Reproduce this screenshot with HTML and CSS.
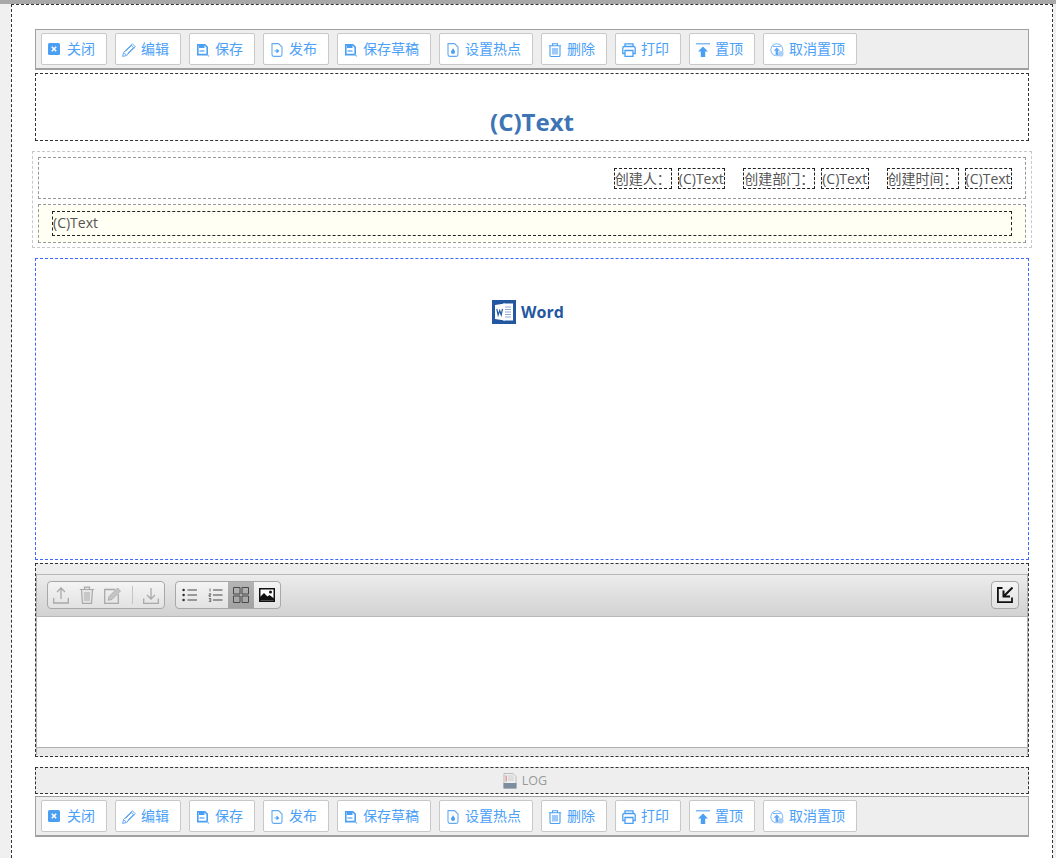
FILE: index.html
```html
<!DOCTYPE html>
<html lang="zh">
<head>
<meta charset="utf-8">
<title>Form</title>
<link rel="stylesheet" href="styles.css">
</head>
<body>
<svg class="defs" width="0" height="0" aria-hidden="true">
  <symbol id="i-close" viewBox="0 0 14 14"><rect x="0" y="0" width="12" height="12" rx="1.500" fill="#4b9ff2"/><path d="M3.800 3.800l4.400 4.400M8.200 3.800l-4.400 4.400" stroke="#fff" stroke-width="1.600" fill="none"/></symbol>
  <symbol id="i-edit" viewBox="0 0 14 14"><path d="M.6 13.400l1-4L10.400.8l3 3-8.800 8.700zM1.600 9.400l3 3M9 2.200l3 3M3.500 8.500l6.500-6.500M5.500 10.500l6.500-6.500" fill="none" stroke="#62a9f3" stroke-width="1"/></symbol>
  <symbol id="i-save" viewBox="0 0 14 14"><path d="M1.800 1.800h7l2.400 2.400v7.400H1.800z" fill="none" stroke="#4b9ff2" stroke-width="1.600"/><rect x="3" y="1.500" width="5.500" height="3.500" fill="#4b9ff2"/><path d="M3.500 8h5" stroke="#4b9ff2" stroke-width="1.200"/><path d="M11 11.500l2 2" stroke="#8cc0f5" stroke-width="1.100"/></symbol>
  <symbol id="i-pub" viewBox="0 0 14 14"><path d="M2 .6h6.500L12 4v7.600a1.800 1.800 0 0 1-1.800 1.800H3.800A1.800 1.800 0 0 1 2 11.600z" fill="none" stroke="#62a9f3" stroke-width="1.100"/><path d="M4.500 8h3.500M6.500 6.200L8.500 8l-2 1.800" fill="none" stroke="#4b9ff2" stroke-width="1.200"/></symbol>
  <symbol id="i-hot" viewBox="0 0 14 14"><path d="M2 .6h6.500L12 4v7.600a1.800 1.800 0 0 1-1.800 1.800H3.800A1.800 1.800 0 0 1 2 11.600z" fill="none" stroke="#62a9f3" stroke-width="1.100"/><path d="M7 5c.3 1.300 2 2.200 2 4a2 2 0 0 1-4 0C5 7.800 6.500 6.800 7 5z" fill="#4b9ff2"/></symbol>
  <symbol id="i-del" viewBox="0 0 14 14"><path d="M.8 2.800h12.400M4.500 2.500V.8h5v1.700M2 3v9.200a1.300 1.300 0 0 0 1.300 1.300h7.400a1.300 1.300 0 0 0 1.300-1.300V3M5 5v6.500M7 5v6.500M9 5v6.500" fill="none" stroke="#4b9ff2" stroke-width="1.100"/></symbol>
  <symbol id="i-print" viewBox="0 0 14 14"><path d="M3 3.500V.8h8v2.700M3 10.500H.8V5a1.500 1.500 0 0 1 1.500-1.500h9.400A1.500 1.500 0 0 1 13.200 5v5.500H11M3 7.500h8v5.800H3z" fill="none" stroke="#4b9ff2" stroke-width="1.300"/></symbol>
  <symbol id="i-top" viewBox="0 0 14 14"><path d="M0 .8h14" stroke="#62a9f3" stroke-width="1.200"/><path d="M7 3.500l5 5H9.200V14H4.800V8.500H2z" fill="#4b9ff2"/></symbol>
  <symbol id="i-untop" viewBox="0 0 14 14"><circle cx="6.800" cy="6.800" r="6" fill="none" stroke="#8cc0f5" stroke-width="1.100"/><path d="M3 3.500h7.600" stroke="#7db8f4"/><path d="M6.800 4.500l3.200 3.200H8V12H5.600V7.700h-2z" fill="#62a9f3"/><circle cx="10.800" cy="10.800" r="2.800" fill="#a9cff5"/></symbol>
  <symbol id="i-log" viewBox="0 0 14 16"><path d="M1 .5h9l3 3V15H1z" fill="#eee" stroke="#bbb"/><rect x="2.500" y="2.500" width="1.500" height="6" fill="#e59a9a"/><path d="M5 3h5M5 5h6M5 7h6" stroke="#ccc"/><rect x="0.500" y="10" width="13" height="5.500" fill="#7d8da0"/></symbol>
</svg>

<main class="page">
  <nav class="toolbar">
    <a class="btn"><svg class="ico"><use href="#i-close"/></svg>关闭</a>
    <a class="btn"><svg class="ico"><use href="#i-edit"/></svg>编辑</a>
    <a class="btn"><svg class="ico"><use href="#i-save"/></svg>保存</a>
    <a class="btn"><svg class="ico"><use href="#i-pub"/></svg>发布</a>
    <a class="btn"><svg class="ico"><use href="#i-save"/></svg>保存草稿</a>
    <a class="btn"><svg class="ico"><use href="#i-hot"/></svg>设置热点</a>
    <a class="btn"><svg class="ico"><use href="#i-del"/></svg>删除</a>
    <a class="btn"><svg class="ico"><use href="#i-print"/></svg>打印</a>
    <a class="btn"><svg class="ico"><use href="#i-top"/></svg>置顶</a>
    <a class="btn"><svg class="ico"><use href="#i-untop"/></svg>取消置顶</a>
  </nav>

  <h1 class="title">(C)Text</h1>

  <section class="info">
    <div class="meta">
      <span class="cell">创建人：</span><span class="cell value">(C)Text</span>
      <span class="cell gap">创建部门：</span><span class="cell value">(C)Text</span>
      <span class="cell gap">创建时间：</span><span class="cell value">(C)Text</span>
    </div>
    <div class="summary"><div class="summary-text">(C)Text</div></div>
  </section>

  <section class="doc">
    <div class="doc-head">
      <svg class="word" viewBox="0 0 24 24" width="24" height="24">
        <rect width="24" height="24" fill="#23579f"/>
        <rect x="11" y="3.500" width="10" height="17" fill="#fff"/>
        <path d="M13 7h6M13 9.500h6M13 12h6M13 14.500h6M13 17h6" stroke="#8fa9cf" stroke-width="1.200"/>
        <path d="M3 5l10-1.500v17L3 19z" fill="#fff"/>
        <path d="M4.800 8.800l1.300 6.200 1.600-4.500 1.500 4.500 1.300-6.200" fill="none" stroke="#23579f" stroke-width="1.200"/>
      </svg>
      <span class="word-name">Word</span>
    </div>
  </section>

  <section class="files">
    <div class="files-frame">
      <div class="files-bar">
        <div class="group">
          <span class="tool"><svg width="16" height="18" viewBox="0 0 16 18"><path d="M8 13V2.500M4 6l4-4 4 4M.7 12v5h14.600v-5" fill="none" stroke="#a9a9a9" stroke-width="1.300"/></svg></span>
          <span class="tool"><svg width="16" height="18" viewBox="0 0 16 18"><path d="M.8 3.500h14.400M5.500 3V1.200h5V3M2.500 4l1 13.300h9l1-13.300" fill="#e6e6e6" stroke="#a9a9a9" stroke-width="1.200"/><path d="M6 6v9M8 6v9M10 6v9" stroke="#a9a9a9"/></svg></span>
          <span class="tool"><svg width="18" height="18" viewBox="0 0 18 18"><path d="M11 3.500H.7v13.800h13.600V8" fill="none" stroke="#a9a9a9" stroke-width="1.300"/><path d="M5 10.500L13.500 2l3 3-8.500 8.500-3.800.8z" fill="#c4c4c4" stroke="#a9a9a9" stroke-width=".8"/></svg></span>
          <span class="sep"></span>
          <span class="tool"><svg width="16" height="18" viewBox="0 0 16 18"><path d="M8 2v10.500M4 9l4 4 4-4M.7 12.500v4.800h14.600v-4.800" fill="none" stroke="#a9a9a9" stroke-width="1.300"/></svg></span>
        </div>
        <div class="group">
          <span class="view"><svg width="15" height="14" viewBox="0 0 15 14"><path d="M5.500 2h9.500M5.500 7h9.500M5.500 12h9.500" stroke="#333" stroke-width=".9"/><circle cx="1.600" cy="2" r="1.300" fill="#333"/><circle cx="1.600" cy="7" r="1.300" fill="#333"/><circle cx="1.600" cy="12" r="1.300" fill="#333"/></svg></span>
          <span class="view"><svg width="15" height="14" viewBox="0 0 15 14"><path d="M5 2h9.500M5 7h9.500M5 12h9.500" stroke="#333" stroke-width=".9"/><path d="M2 .5v3M.8 5.800h2v1.200H1v1.300h2M.8 10.500h2v3h-2M1.200 12h1.500" stroke="#444" stroke-width=".7" fill="none"/></svg></span>
          <span class="view view-on"><svg width="16" height="16" viewBox="0 0 16 16"><path d="M.5.500h6.500v6.500H.5zM9 .5h6.500v6.500H9zM.5 9h6.500v6.500H.5zM9 9h6.500v6.500H9z" fill="none" stroke="#4a4a4a" stroke-width="1"/></svg></span>
          <span class="view"><svg width="16" height="14" viewBox="0 0 16 14"><rect x=".75" y=".75" width="14.500" height="12.500" fill="#fff" stroke="#111" stroke-width="1.500"/><path d="M1 12.500V9l4-4 3.500 3.500 2-1.500 4.500 3.500v2z" fill="#111"/><circle cx="11.500" cy="4" r="1.500" fill="#111"/></svg></span>
        </div>
        <span class="expand"><svg width="16" height="16" viewBox="0 0 16 16"><path d="M5.500 1H.9v14.100H15V10.500" fill="none" stroke="#111" stroke-width="1.800"/><path d="M15.500.5L7 9M6.500 3.500V9.500H13" fill="none" stroke="#111" stroke-width="2"/></svg></span>
      </div>
      <div class="files-body"></div>
      <div class="files-foot"></div>
    </div>
  </section>

  <div class="log"><svg class="log-ico"><use href="#i-log"/></svg>LOG</div>

  <nav class="toolbar toolbar-bottom">
    <a class="btn"><svg class="ico"><use href="#i-close"/></svg>关闭</a>
    <a class="btn"><svg class="ico"><use href="#i-edit"/></svg>编辑</a>
    <a class="btn"><svg class="ico"><use href="#i-save"/></svg>保存</a>
    <a class="btn"><svg class="ico"><use href="#i-pub"/></svg>发布</a>
    <a class="btn"><svg class="ico"><use href="#i-save"/></svg>保存草稿</a>
    <a class="btn"><svg class="ico"><use href="#i-hot"/></svg>设置热点</a>
    <a class="btn"><svg class="ico"><use href="#i-del"/></svg>删除</a>
    <a class="btn"><svg class="ico"><use href="#i-print"/></svg>打印</a>
    <a class="btn"><svg class="ico"><use href="#i-top"/></svg>置顶</a>
    <a class="btn"><svg class="ico"><use href="#i-untop"/></svg>取消置顶</a>
  </nav>
</main>
</body>
</html>
```
FILE: styles.css
```css
* { box-sizing: border-box; }
html, body { height: 100%; }
body {
  margin: 0;
  background: #f0f0f0;
  border-top: 4px solid #a8a8a8;
  font-family: "Open Sans", "Noto Sans CJK SC", sans-serif;
  font-size: 14px;
  color: #555;
  overflow: hidden;
}
.defs { display: block; height: 0; }
.page {
  width: 1042px;
  height: 854px;
  margin-left: 11px;
  padding: 24px 23px 0;
  background: #fff;
  border-top: 1px dashed #333;
  border-left: 1px dashed #333;
  border-right: 1px dashed #333;
}
.toolbar {
  display: flex;
  gap: 8px;
  height: 41px;
  padding: 3px 5px;
  background: #eee;
  border: 1px solid #a0a0a0;
  border-bottom-width: 2px;
}
.btn {
  display: flex;
  align-items: center;
  height: 32px;
  padding: 0 11px 2px 6px;
  background: #fff;
  border: 1px solid #c8c8c8;
  border-radius: 2px;
  color: #4ba0f7;
  font-size: 14px;
  white-space: nowrap;
}
.ico { width: 14px; height: 14px; margin: 4px 5px 0 0; flex: none; }
.title {
  display: flex;
  align-items: flex-end;
  justify-content: center;
  height: 68px;
  margin: 3px 0 0;
  border: 1px dashed #333;
  color: #3d74b6;
  font-size: 24px;
  font-weight: 700;
  line-height: 36px;
}
.info {
  width: 1000px;
  height: 97px;
  margin: 10px 0 0 -3px;
  padding: 5px;
  border: 1px dashed #c8c8c8;
}
.meta {
  display: flex;
  justify-content: flex-end;
  align-items: center;
  gap: 6px;
  height: 42px;
  padding-right: 13px;
  border: 1px dashed #999;
}
.cell {
  height: 21px;
  line-height: 19px;
  border: 1px dashed #222;
  white-space: nowrap;
}
.value { min-width: 47.4px; }
.gap { margin-left: 12px; }
.summary {
  height: 39px;
  margin-top: 5px;
  padding: 6px 13px;
  background: #fffff3;
  border: 1px dashed #999;
}
.summary-text {
  height: 25px;
  line-height: 21px;
  border: 1px dashed #222;
}
.doc {
  height: 302px;
  margin-top: 10px;
  padding: 41px 8px 0 0;
  border: 1px dashed #3f66ff;
}
.doc-head {
  display: flex;
  align-items: center;
  justify-content: center;
  gap: 5px;
}
.word { flex: none; }
.word-name {
  color: #23579f;
  font-size: 16px;
  font-weight: 700;
}
.files {
  height: 194px;
  margin-top: 3px;
  padding: 10px 0 1px;
  background: #ededed;
  border: 1px dashed #333;
}
.files-frame {
  display: flex;
  flex-direction: column;
  height: 100%;
  background: #e8e8e8;
  border-left: 1px solid #b0b0b0;
  border-right: 1px solid #b0b0b0;
}
.files-bar {
  display: flex;
  align-items: center;
  flex: none;
  height: 43px;
  padding: 0 8px 1px 10px;
  background: linear-gradient(#ececec, #d2d2d2);
  border-top: 1px solid #b8b8b8;
  border-bottom: 1px solid #b8b8b8;
}
.group {
  display: flex;
  align-items: center;
  height: 28px;
  margin-right: 10px;
  overflow: hidden;
  border: 1px solid #a8a8a8;
  border-radius: 4px;
  background: linear-gradient(#f4f4f4, #e2e2e2);
}
.tool {
  display: flex;
  justify-content: center;
  width: 26px;
}
.sep { width: 1px; height: 18px; margin: 0 5px 0 6px; background: #c4c4c4; }
.view {
  display: flex;
  align-items: center;
  justify-content: center;
  width: 26px;
  height: 100%;
}
.view-on { background: linear-gradient(#b4b4b4, #a2a2a2); }
.expand {
  display: flex;
  align-items: center;
  justify-content: center;
  width: 28px;
  height: 28px;
  margin-left: auto;
  border: 1px solid #a8a8a8;
  border-radius: 4px;
  background: linear-gradient(#f4f4f4, #e2e2e2);
}
.files-body { flex: 1; background: #fff; }
.files-foot { flex: none; height: 8px; border-top: 1px solid #b0b0b0; }
.log {
  display: flex;
  align-items: center;
  justify-content: center;
  height: 27px;
  margin-top: 10px;
  padding-right: 14px;
  background: #eee;
  border: 1px dashed #333;
  color: #999;
  font-size: 12.5px;
}
.log-ico { width: 14px; height: 16px; margin-right: 5px; }
.toolbar-bottom { margin-top: 2px; }
```
